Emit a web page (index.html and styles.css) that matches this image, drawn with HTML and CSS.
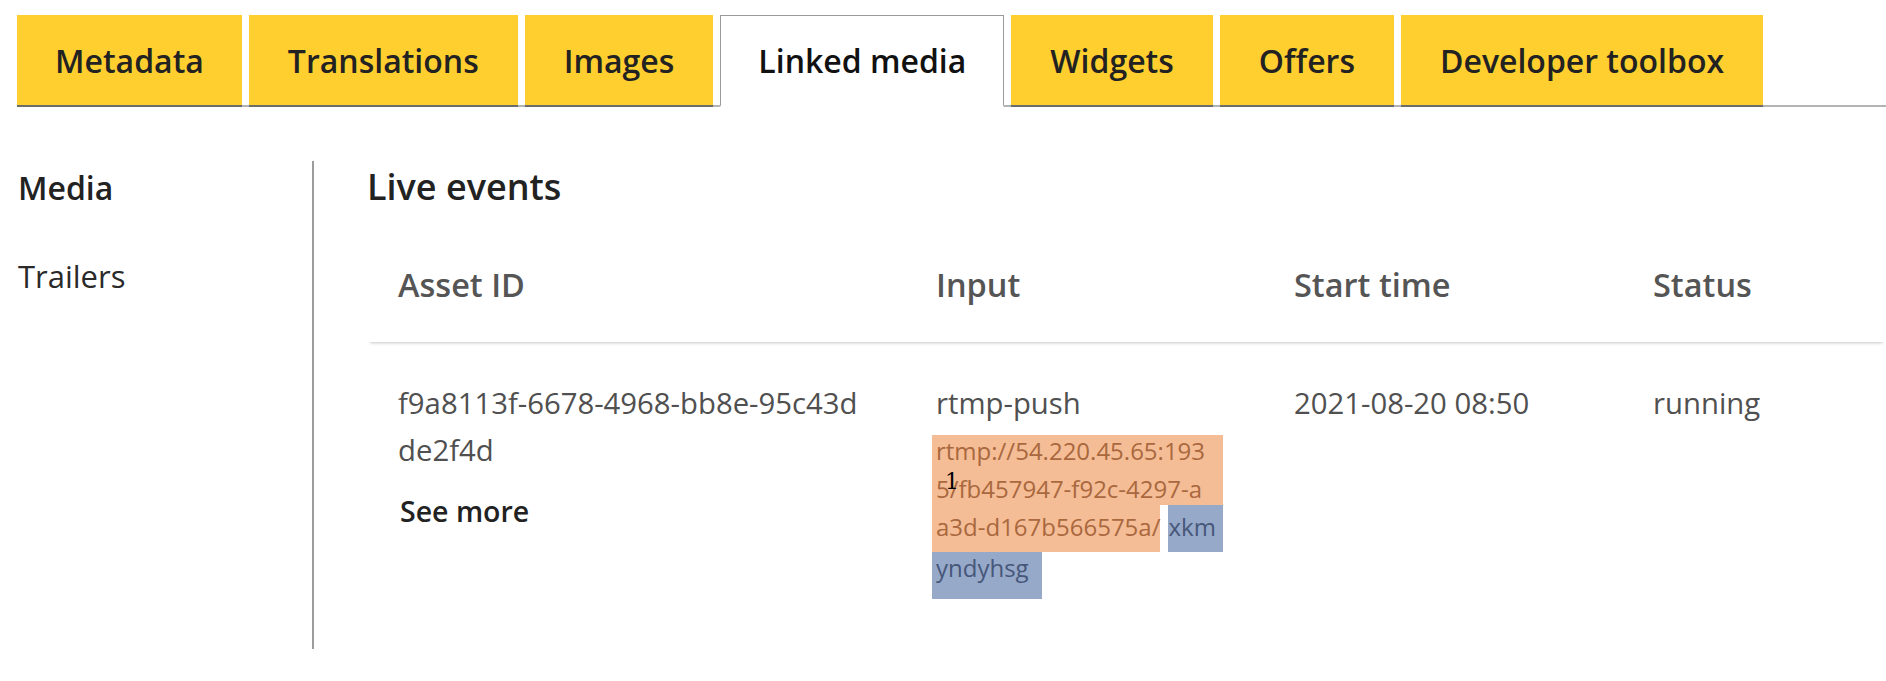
FILE: index.html
```html
<!DOCTYPE html>
<html lang="en">
<head>
<meta charset="utf-8">
<title>Linked media</title>
<link rel="stylesheet" href="styles.css">
</head>
<body>
<nav class="tabs">
  <a class="tab">Metadata</a>
  <a class="tab">Translations</a>
  <a class="tab">Images</a>
  <a class="tab tab-active">Linked media</a>
  <a class="tab">Widgets</a>
  <a class="tab">Offers</a>
  <a class="tab">Developer toolbox</a>
</nav>
<div class="layout">
  <aside class="sidebar">
    <div class="side-item side-active">Media</div>
    <div class="side-item">Trailers</div>
  </aside>
  <main class="main">
    <h2 class="heading">Live events</h2>
    <div class="table">
      <div class="thead">
        <div class="th">Asset ID</div>
        <div class="th">Input</div>
        <div class="th">Start time</div>
        <div class="th">Status</div>
      </div>
      <div class="trow">
        <div class="td">
          <div class="asset-id">f9a8113f-6678-4968-bb8e-95c43d<br>de2f4d</div>
          <div class="see-more">See more</div>
        </div>
        <div class="td">
          <div class="input-type">rtmp-push</div>
          <div class="url">
            <div class="url-line l1"><span class="hl-orange full">rtmp://54.220.45.65:193</span></div>
            <div class="url-line l2"><span class="hl-orange full">5/fb457947-f92c-4297-a</span></div>
            <div class="url-line l3"><span class="hl-orange">a3d-d167b566575a/</span><span class="hl-blue grow">xkm</span></div>
            <div class="url-line l4"><span class="hl-blue short">yndyhsg</span></div>
            <span class="marker">1</span>
          </div>
        </div>
        <div class="td">2021-08-20 08:50</div>
        <div class="td">running</div>
      </div>
    </div>
  </main>
</div>
</body>
</html>
```
FILE: styles.css
```css
* { box-sizing: border-box; }

body {
  margin: 0;
  background: #fff;
  font-family: "Open Sans", "Liberation Sans", sans-serif;
  color: #222;
}

/* Tabs */
.tabs {
  display: flex;
  gap: 7px;
  margin: 15px 0 0 17px;
  height: 92px;
  border-bottom: 2px solid #b4b4b4;
}

.tab {
  display: flex;
  align-items: center;
  height: 92px;
  padding: 0 39px;
  background: #ffcf2f;
  border-bottom: 2px solid #6c6c6c;
  font-size: 32px;
  font-weight: 600;
  color: #222;
  white-space: nowrap;
}

.tab:first-child { padding: 0 38px; }

.tab-active {
  position: relative;
  background: #fff;
  border: 1px solid #9a9a9a;
  border-bottom: 2px solid #fff;
  color: #111;
  padding: 0 37px;
}

/* Layout */
.layout {
  display: flex;
  margin-top: 54px;
}

.sidebar {
  width: 314px;
  flex: none;
  padding: 5px 0 0 18px;
  border-right: 2px solid #9c9c9c;
  display: flex;
  flex-direction: column;
  gap: 44px;
}

.side-item {
  font-size: 31px;
  line-height: 44px;
  color: #2a2a2a;
}

.side-active {
  font-size: 32px;
  font-weight: 600;
  color: #222;
}

.main {
  flex: 1;
  padding: 1px 0 50px 53px;
}

.heading {
  margin: 0 0 20px;
  font-size: 36px;
  font-weight: 600;
  line-height: 50.4px;
  color: #222;
}

/* Table */
.thead,
.trow {
  display: grid;
  grid-template-columns: 538px 358px 359px 1fr;
}

.thead {
  padding: 31px 0 35px;
  box-shadow: 0 4px 3px -3px rgba(0, 0, 0, 0.22);
}

.th {
  padding-left: 31px;
  font-size: 32.5px;
  font-weight: 600;
  line-height: 43.6px;
  color: #555;
}

.trow {
  padding-top: 38px;
}

.td {
  padding-left: 31px;
  font-size: 29.3px;
  line-height: 47px;
  color: #505050;
}

.see-more {
  margin: 18px 0 0 2px;
  font-size: 28.5px;
  font-weight: 600;
  line-height: normal;
  color: #222;
}

.url {
  position: relative;
  margin: 8px 0 0 -4px;
  width: 291px;
  font-size: 24px;
  line-height: 32px;
}

.url-line {
  display: flex;
  gap: 8px;
}

.l1 { height: 35px; }
.l2 { height: 35px; }
.l3 { height: 47px; }
.l4 { height: 47px; }

.hl-orange,
.hl-blue {
  display: block;
  height: 100%;
  padding-left: 4px;
}

.hl-orange {
  background: #f5bd96;
  color: #a9683e;
}

.hl-blue {
  background: #97a9c9;
  color: #46577a;
}

.full { flex: 1; }
.grow { flex: 1; padding-left: 0; }
.short { width: 110px; }

.l2 .hl-orange { padding-top: 3px; }
.l3 .hl-orange,
.l3 .hl-blue { padding-top: 6px; }

.marker {
  position: absolute;
  left: 13px;
  top: 36px;
  font-family: "DejaVu Serif", serif;
  font-size: 22px;
  line-height: 22px;
  color: #000;
}
```
